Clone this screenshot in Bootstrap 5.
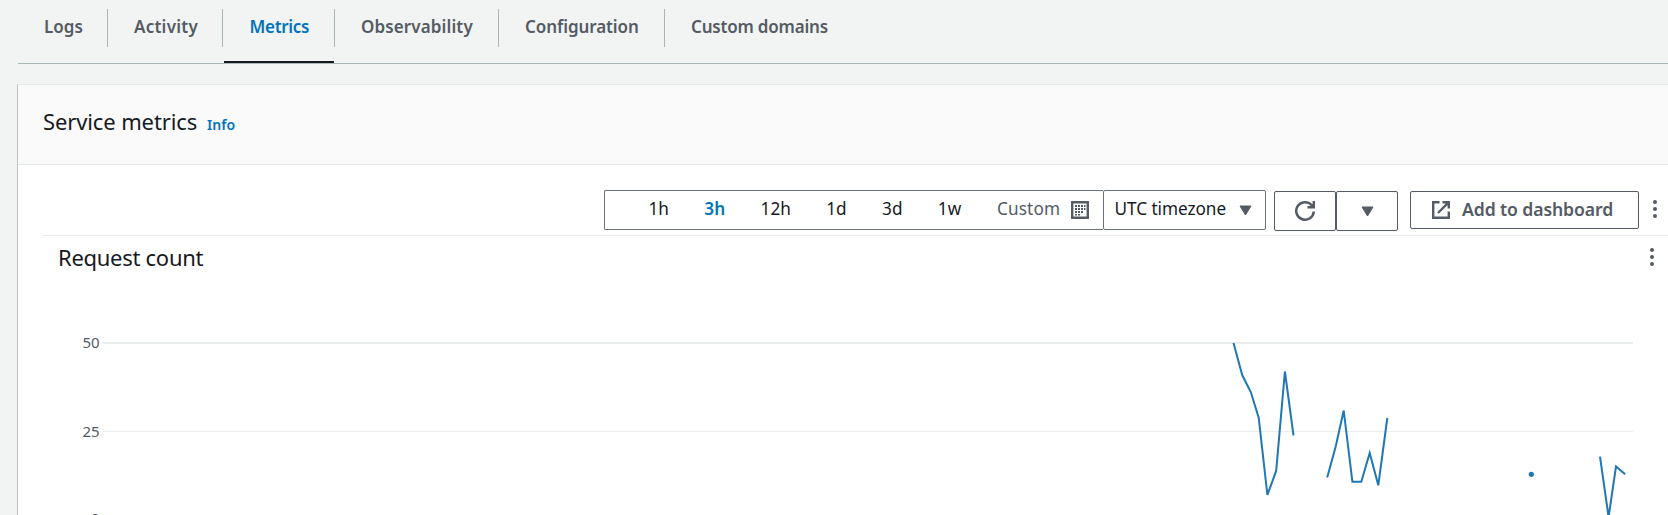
<!DOCTYPE html>
<html lang="en">
<head>
<meta charset="utf-8">
<title>Service metrics</title>
<link rel="stylesheet" href="https://cdn.jsdelivr.net/npm/bootstrap@5.3.0/dist/css/bootstrap.min.css">
<style>
  body { background: #f2f4f3; color: #16191f; font-family: "Noto Sans", "Open Sans", sans-serif; height: 515px; overflow: hidden; }
  svg { display: block; flex: none; }
  .service-tabs { margin-left: 18px; height: 64px; border-bottom: 1px solid #aab7b8; }
  .service-tabs .nav-item { padding-top: 9px; height: 63px; }
  .service-tabs .nav-link { padding: 0 24px 0 26px; height: 38px; line-height: 36px; font-size: 17px; font-weight: 600; color: #545b64; border-right: 1px solid #aab7b8; border-radius: 0; white-space: nowrap; }
  .service-tabs .nav-item:last-child .nav-link { border-right: 0; letter-spacing: -.2px; }
  .service-tabs .active-tab { position: relative; }
  .service-tabs .active-tab .nav-link { color: #0073bb; }
  .service-tabs .active-tab::after { content: ""; position: absolute; left: 1px; right: 1px; bottom: 0; height: 2px; background: #16191f; }
  .w-logs { width: 90px; } .w-activity { width: 115px; letter-spacing: .25px; } .service-tabs .w-metrics { width: 112px; padding-left: 26.5px; letter-spacing: -.3px; }
  .w-observe { width: 164px; letter-spacing: .12px; } .w-config { width: 166px; letter-spacing: -.08px; }
  .panel { margin: 20px 0 0 17px; height: 440px; background: #fff; border: 0; border-left: 1px solid #bcc2c3; border-top: 1px solid #e4e8e8; border-radius: 0; }
  .panel-head { height: 80px; padding: 0 0 7px 25px; background: #fafafa; border-bottom: 1px solid #e4e9e9; }
  .title-lg { font-size: 22px; line-height: 30px; font-weight: 400; margin: 0; letter-spacing: -.12px; }
  .info-link { font-size: 14px; font-weight: 600; color: #0073bb; text-decoration: none; margin-left: 10px; }
  .tools { height: 71px; margin-left: 25px; padding: 25px 9px 0 0; border-bottom: 1px solid #eaeded; }
  .box { background: #fff; border: 1px solid #545b64; border-radius: 2px; padding: 0; color: #545b64; height: 40px; }
  .range { width: 499px; gap: 35.4px; padding-left: 43.5px; font-size: 17.2px; color: #16191f; border-right: 0; border-color: #687078; border-radius: 2px 0 0 2px; line-height: 35px; }
  .range span, .zone span { height: 38px; }
  .range .on { color: #0073bb; font-weight: 600; }
  .range .muted { color: #545b64; letter-spacing: .1px; margin-left: .5px; }
  .range .muted svg { margin-left: 11px; }
  .zone { width: 163px; margin-right: 8px; padding: 0 13px 0 10.5px; font-size: 17.2px; letter-spacing: -.05px; color: #16191f; border-color: #687078; line-height: 35px; }
  .split { width: 62px; margin-top: 1px; }
  .split + .split { margin: 1px 12px 0 0; }
  .add { width: 229px; height: 38px; margin-top: 1px; padding-left: 21px; gap: 12px; font-size: 17.6px; letter-spacing: -.1px; font-weight: 600; }
  .add span { line-height: 35px; height: 36px; }
  .kebab { margin: 8px 0 0 12px; }
  .chart-head { height: 46px; padding: 6px 14px 0 40px; }
  .chart-head h2 { letter-spacing: -.28px; }
  .chart text { font-size: 15px; fill: #545b64; text-anchor: end; letter-spacing: -.1px; }
</style>
<script src="https://cdn.jsdelivr.net/npm/bootstrap@5.3.0/dist/js/bootstrap.bundle.min.js"></script>
</head>
<body>
<ul class="nav service-tabs flex-nowrap">
  <li class="nav-item"><a class="nav-link w-logs" href="#">Logs</a></li>
  <li class="nav-item"><a class="nav-link w-activity" href="#">Activity</a></li>
  <li class="nav-item active-tab"><a class="nav-link w-metrics" href="#">Metrics</a></li>
  <li class="nav-item"><a class="nav-link w-observe" href="#">Observability</a></li>
  <li class="nav-item"><a class="nav-link w-config" href="#">Configuration</a></li>
  <li class="nav-item"><a class="nav-link" href="#">Custom domains</a></li>
</ul>
<main class="card panel">
  <div class="panel-head d-flex align-items-center">
    <div class="d-flex align-items-baseline"><h1 class="title-lg">Service metrics</h1><a class="info-link" href="#">Info</a></div>
  </div>
  <div class="tools d-flex justify-content-end align-items-start">
    <div class="box range d-flex align-items-center">
      <span>1h</span><span class="on">3h</span><span>12h</span><span>1d</span><span>3d</span><span>1w</span>
      <div class="muted d-flex align-items-center"><span>Custom</span>
        <svg width="18" height="18" viewBox="0 0 18 18"><path d="M1.200 1.200h15.600v15.600H1.200z" fill="none" stroke="#545b64" stroke-width="2.400"/><g fill="#545b64"><path d="M7 4h2v2H7zM10 4h2v2h-2zM13 4h1.500v2H13zM4 7h2v2H4zM7 7h2v2H7zM10 7h2v2h-2zM13 7h1.500v2H13zM4 10h2v2H4zM7 10h2v2H7zM10 10h2v2h-2zM4 13h2v1.500H4zM7 13h2v1.500H7zM4 4h2v2H4z"/></g></svg>
      </div>
    </div>
    <div class="box zone d-flex align-items-center justify-content-between"><span>UTC timezone</span>
      <svg width="13" height="11" viewBox="0 0 13 11"><path d="M1 1h11L6.500 10z" fill="#545b64" stroke="#545b64" stroke-linejoin="round"/></svg></div>
    <button class="box split d-flex align-items-center justify-content-center" aria-label="Refresh">
      <svg width="22" height="22" viewBox="0 0 22 22" fill="none" stroke="#545b64" stroke-width="2.500"><path d="M19.800 11.500A8.800 8.800 0 1 1 17.500 5L20 7.200M19.800 1v6.200h-6.300"/></svg></button>
    <button class="box split d-flex align-items-center justify-content-center" aria-label="Refresh options">
      <svg width="13" height="11" viewBox="0 0 13 11"><path d="M1 1h11L6.500 10z" fill="#545b64" stroke="#545b64" stroke-linejoin="round"/></svg></button>
    <button class="box add d-flex align-items-center">
      <svg width="18" height="18" viewBox="0 0 18 18" fill="none" stroke="#545b64" stroke-width="2.400"><path d="M7.500 1.200H1.200v15.600h15.600v-6.300M10.500 1.200h6.300v6.300M16.800 1.200L6 12"/></svg>
      <span>Add to dashboard</span></button>
    <svg class="kebab" width="8" height="22" viewBox="0 0 8 22" fill="#545b64"><circle cx="4" cy="4" r="2"/><circle cx="4" cy="11" r="2"/><circle cx="4" cy="18" r="2"/></svg>
  </div>
  <div class="chart-head d-flex justify-content-between align-items-start">
    <h2 class="title-lg">Request count</h2>
    <svg class="mt-1" width="4" height="22" viewBox="0 -1 4 22" fill="#545b64"><circle cx="2" cy="3" r="2"/><circle cx="2" cy="10" r="2"/><circle cx="2" cy="17" r="2"/></svg>
  </div>
  <svg class="chart" width="1650" height="233" viewBox="18 282 1650 233">
    <path d="M103 343H1633" stroke="#eaeded" stroke-width="2"/>
    <path d="M103 431.500H1633" stroke="#eaeded"/>
    <text x="99.500" y="348">50</text><text x="99.500" y="437">25</text><text x="99.500" y="524">0</text>
    <g fill="none" stroke="#1f77b4" stroke-width="2">
      <path d="M1233.500 343L1242.300 375.300L1250.900 392.300L1258.700 417.700L1267.400 495L1276.200 470.700L1284.900 371.500L1293.500 435.500"/>
      <path d="M1327.200 477.500L1335.700 446.500L1343.700 410.500L1352.400 481.700H1361.300L1369.700 453L1378.300 485.300L1387.300 418"/>
      <path d="M1600 456.700L1608.600 517L1616 466.500L1625.200 474.300"/>
    </g>
    <circle cx="1531.300" cy="474.300" r="2.600" fill="#1f77b4"/>
  </svg>
</main>
</body>
</html>
